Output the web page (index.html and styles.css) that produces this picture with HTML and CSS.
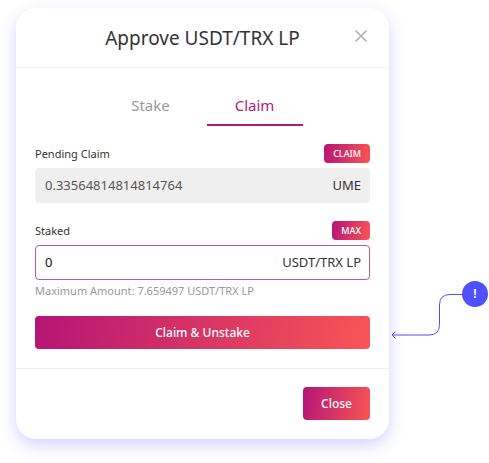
FILE: index.html
```html
<!DOCTYPE html>
<html lang="en">
<head>
<meta charset="utf-8">
<meta name="viewport" content="width=device-width, initial-scale=1">
<title>Approve USDT/TRX LP</title>
<link rel="stylesheet" href="styles.css">
</head>
<body>
<main class="stage">
  <section class="dialog" role="dialog" aria-labelledby="dialog-title">
    <header class="dialog-header">
      <h1 class="dialog-title" id="dialog-title">Approve USDT/TRX LP</h1>
      <button class="dismiss" type="button" aria-label="Dismiss">
        <svg class="dismiss-icon" viewBox="0 0 14 14" aria-hidden="true"><path d="M1.5 1.5 12.5 12.5M12.5 1.5 1.5 12.5"/></svg>
      </button>
    </header>
    <form class="dialog-body">
      <div class="tabs" role="tablist">
        <button class="tab" type="button" role="tab" aria-selected="false">Stake</button>
        <button class="tab tab-active" type="button" role="tab" aria-selected="true">Claim</button>
      </div>
      <div class="group">
        <div class="group-head">
          <label class="label" for="pending">Pending Claim</label>
          <button class="chip" type="button">CLAIM</button>
        </div>
        <div class="field field-readonly">
          <input class="input" id="pending" type="text" value="0.33564814814814764" readonly>
          <span class="unit">UME</span>
        </div>
      </div>
      <div class="group">
        <div class="group-head">
          <label class="label" for="staked">Staked</label>
          <button class="chip" type="button">MAX</button>
        </div>
        <div class="field">
          <input class="input" id="staked" type="text" value="0">
          <span class="unit">USDT/TRX LP</span>
        </div>
        <p class="hint">Maximum Amount: 7.659497 USDT/TRX LP</p>
      </div>
      <button class="button button-wide" type="button">Claim &amp; Unstake</button>
    </form>
    <footer class="dialog-footer">
      <button class="button" type="button">Close</button>
    </footer>
  </section>
  <aside class="callout">
    <svg class="connector" viewBox="0 0 72 54" aria-hidden="true">
      <path d="M72 7.500H60Q49.500 7.500 49.500 18V37.500Q49.500 48 39 48H2"/>
      <path d="M5.500 44.500 2 48 5.500 51.500"/>
    </svg>
    <span class="marker">!</span>
  </aside>
</main>
</body>
</html>
```
FILE: styles.css
```css
* {
  box-sizing: border-box;
}

body {
  margin: 0;
  background: #fff;
  color: #333;
  font-family: "Noto Sans", "Open Sans", sans-serif;
  font-size: 13px;
}

button,
input {
  font: inherit;
}

button {
  border: 0;
  padding: 0;
  cursor: pointer;
}

.stage {
  display: flex;
  align-items: flex-start;
  padding: 8px 0 24px 16px;
}

.dialog {
  flex: 1;
  min-width: 0;
  border-radius: 20px;
  background: #fff;
  box-shadow: 0 6px 16px rgba(80, 80, 255, 0.25);
}

.dialog-header {
  display: grid;
  grid-template-columns: 20px 1fr 20px;
  align-items: center;
  height: 60px;
  padding: 0 18px;
  border-bottom: 1px solid #f0f0f0;
}

.dialog-title {
  grid-column: 2;
  margin: 0;
  font-size: 19px;
  font-weight: 400;
  line-height: 26px;
  text-align: center;
}

.dismiss {
  display: flex;
  justify-content: center;
  background: none;
  padding-bottom: 4px;
}

.dismiss-icon {
  width: 14px;
  height: 14px;
  fill: none;
  stroke: #b0b0b0;
  stroke-width: 1.6;
}

.dialog-body {
  padding: 18px 19px 19px;
}

.tabs {
  display: flex;
  justify-content: center;
  gap: 8px;
  margin-bottom: 18px;
}

.tab {
  width: 96px;
  height: 40px;
  border-bottom: 2px solid transparent;
  background: none;
  color: #999;
  font-size: 15px;
}

.tab-active {
  border-color: #b01c78;
  color: #b01c78;
}

.group-head {
  display: flex;
  align-items: center;
  justify-content: space-between;
  margin-bottom: 5px;
}

.group + .group {
  margin-top: 18px;
}

.label {
  font-size: 11px;
}

.chip {
  height: 19px;
  padding: 0 9px;
  border-radius: 4px;
  background: linear-gradient(100deg, #b51575, #f95555);
  color: #fff;
  font-size: 9px;
  font-weight: 500;
}

.field {
  display: flex;
  align-items: center;
  height: 35px;
  padding: 0 8px 1px 9px;
  border: 1px solid #b55c98;
  border-radius: 4px;
}

.field-readonly {
  border-color: #efefef;
  background: #efefef;
}

.input {
  flex: 1;
  min-width: 0;
  padding: 0;
  border: 0;
  outline: 0;
  background: none;
  color: #111;
}

.field-readonly .input {
  color: #555;
}

.hint {
  margin: 0 0 14px;
  color: #999;
  font-size: 11px;
  line-height: 22px;
}

.button {
  height: 33px;
  padding: 0 18px;
  border-radius: 4px;
  background: linear-gradient(100deg, #b51575, #f95555);
  color: #fff;
  font-size: 12px;
  font-weight: 500;
}

.button-wide {
  display: block;
  width: 100%;
}

.dialog-footer {
  display: flex;
  justify-content: flex-end;
  padding: 18px 19px 19px;
  border-top: 1px solid #eee;
}

.callout {
  display: flex;
  align-items: flex-start;
  width: 100px;
  margin-top: 273px;
  padding-left: 1px;
}

.connector {
  width: 72px;
  height: 54px;
  margin-top: 6px;
  fill: none;
  stroke: #5050ff;
}

.marker {
  width: 26px;
  height: 26px;
  border-radius: 50%;
  background: #5050ff;
  color: #fff;
  font-size: 12px;
  font-weight: 600;
  line-height: 26px;
  text-align: center;
}
```
